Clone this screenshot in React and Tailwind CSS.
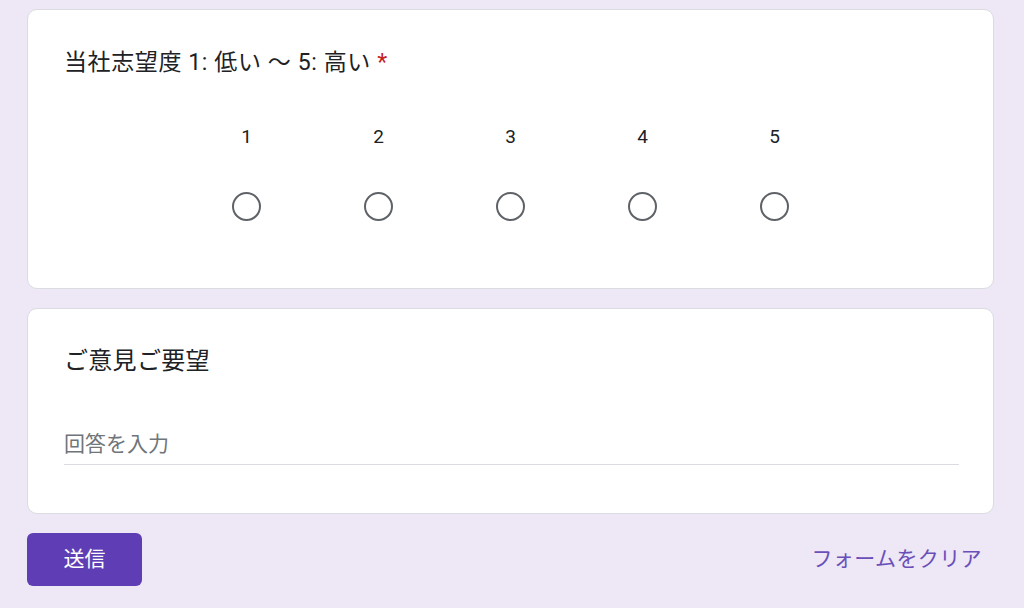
export default function App() {
  const font = { fontFamily: 'Roboto, "Noto Sans CJK JP", sans-serif' };
  return (
    <div className="w-[1024px] h-[608px] bg-[#ede7f6] overflow-hidden" style={font}>
      <div className="pt-[9px] pl-[27px] w-[994px] flex flex-col">
        <div className="h-[280px] bg-white rounded-[10px] border border-[#dadce0] px-[36px] pt-[37px]">
          <div className="text-[23px] leading-[32px] text-[#202124] tracking-[0.6px]">
            当社志望度 1: 低い 〜 5: 高い <span className="text-[#c5221f]">*</span>
          </div>
          <div className="flex justify-center mt-[43px]">
            {[1, 2, 3, 4, 5].map((n) => (
              <div key={n} className="w-[132px] flex flex-col items-center">
                <div className="text-[19px] leading-[30px] text-[#202124]">{n}</div>
                <div className="mt-[40px] w-[29px] h-[29px] rounded-full border-[2.5px] border-[#5f6368]" />
              </div>
            ))}
          </div>
        </div>
        <div className="mt-[19px] h-[206px] bg-white rounded-[10px] border border-[#dadce0] px-[36px] pt-[36px]">
          <div className="text-[24px] leading-[32px] text-[#202124] tracking-[0.3px]">ご意見ご要望</div>
          <div className="mt-[54px] w-[895px] border-b border-[#dadce0] pb-[7px]">
            <div className="text-[21px] leading-[26px] text-[#70757a]">回答を入力</div>
          </div>
        </div>
        <div className="mt-[19px] flex items-center justify-between">
          <div className="w-[115px] h-[53px] rounded-[6px] bg-[#5f3db5] text-white text-[21px] flex items-center justify-center">
            送信
          </div>
          <div className="text-[21px] text-[#6b4fb8] mr-[12px] tracking-[0.4px]">フォームをクリア</div>
        </div>
      </div>
    </div>
  );
}
